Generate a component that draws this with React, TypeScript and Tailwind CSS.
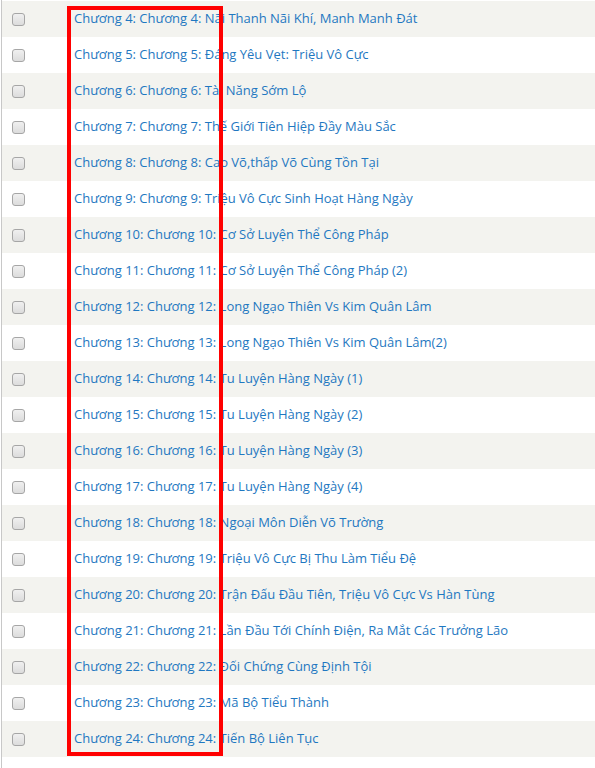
import React from 'react';

const chapters: [number, string][] = [
  [4, 'Nãi Thanh Nãi Khí, Manh Manh Đát'],
  [5, 'Đáng Yêu Vẹt: Triệu Vô Cực'],
  [6, 'Tài Năng Sớm Lộ'],
  [7, 'Thế Giới Tiên Hiệp Đầy Màu Sắc'],
  [8, 'Cao Võ,thấp Võ Cùng Tồn Tại'],
  [9, 'Triệu Vô Cực Sinh Hoạt Hàng Ngày'],
  [10, 'Cơ Sở Luyện Thể Công Pháp'],
  [11, 'Cơ Sở Luyện Thể Công Pháp (2)'],
  [12, 'Long Ngạo Thiên Vs Kim Quân Lâm'],
  [13, 'Long Ngạo Thiên Vs Kim Quân Lâm(2)'],
  [14, 'Tu Luyện Hàng Ngày (1)'],
  [15, 'Tu Luyện Hàng Ngày (2)'],
  [16, 'Tu Luyện Hàng Ngày (3)'],
  [17, 'Tu Luyện Hàng Ngày (4)'],
  [18, 'Ngoại Môn Diễn Võ Trường'],
  [19, 'Triệu Vô Cực Bị Thu Làm Tiểu Đệ'],
  [20, 'Trận Đấu Đầu Tiên, Triệu Vô Cực Vs Hàn Tùng'],
  [21, 'Lần Đầu Tới Chính Điện, Ra Mắt Các Trưởng Lão'],
  [22, 'Đối Chứng Cùng Định Tội'],
  [23, 'Mã Bộ Tiểu Thành'],
  [24, 'Tiến Bộ Liên Tục'],
];

const Checkbox = () => (
  <span className="block w-[13px] h-[13px] rounded-[3px] border border-[#a6a6a6] bg-gradient-to-b from-[#f0f0f0] to-[#dcdcdc]" />
);

export default function App() {
  return (
    <div className="relative min-h-[768px] bg-white ml-px border-l border-[#c8c8c8] pt-px font-['Open_Sans',sans-serif] text-[13px]">
      {chapters.map(([n, title], i) => (
        <div
          key={n}
          className={`flex items-center h-9 ${i % 2 === 0 ? 'bg-[#f3f3ef]' : 'bg-white'}`}
        >
          <div className="w-[72px] pl-[10px] flex items-center">
            <Checkbox />
          </div>
          <a className="text-[#1f78c1] whitespace-nowrap">
            Chương {n}: Chương {n}: {title}
          </a>
        </div>
      ))}

      {/* highlight box */}
      <div className="absolute left-[65px] top-[6px] w-[156px] h-[750px] border-4 border-[#ff0000] pointer-events-none" />
    </div>
  );
}
